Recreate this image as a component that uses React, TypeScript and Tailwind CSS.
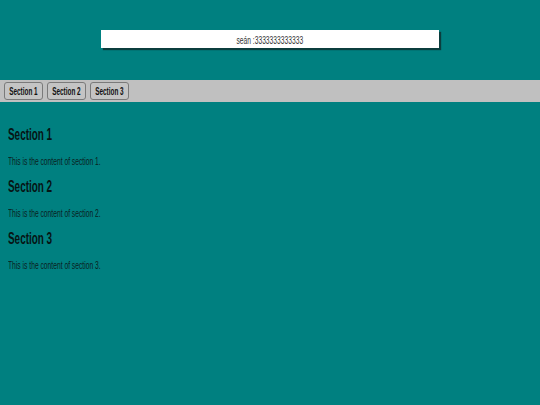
import React from 'react';

const sections = [
  { id: 1, title: 'Section 1', body: 'This is the content of section 1.' },
  { id: 2, title: 'Section 2', body: 'This is the content of section 2.' },
  { id: 3, title: 'Section 3', body: 'This is the content of section 3.' },
];

export default function App() {
  return (
    <div className="min-h-screen bg-[#008080] font-['Liberation_Sans',Arial,sans-serif]">
      {/* Header box */}
      <div className="pt-[30px] pb-[32px]">
        <div className="mx-auto w-[338px] h-[18px] bg-white shadow-[2px_2px_1px_#0b3d3d] flex items-end justify-center pb-[1px]">
          <span className="inline-block scale-x-[0.67] origin-center text-[10px] leading-[12px] text-[#333] whitespace-nowrap">
            seán :3333333333333
          </span>
        </div>
      </div>

      {/* Nav bar */}
      <div className="h-[22px] bg-[#c0c0c0] flex items-center gap-[4px] px-[4px]">
        {sections.map((s) => (
          <button
            key={s.id}
            className="w-[39px] h-[18px] rounded-[3px] border border-[#7a7a7a] bg-[#c4c4c4] flex items-center justify-center overflow-hidden"
          >
            <span className="inline-block scale-x-[0.58] origin-center text-[11px] font-bold leading-none text-[#111] whitespace-nowrap">
              {s.title}
            </span>
          </button>
        ))}
      </div>

      {/* Content */}
      <div className="px-[8px] pt-[24px]">
        {sections.map((s) => (
          <div key={s.id} className="mb-[11.5px]">
            <h2 className="text-[16px] leading-[18px] font-bold text-[#061414]">
              <span className="inline-block scale-x-[0.62] origin-left whitespace-nowrap">{s.title}</span>
            </h2>
            <p className="mt-[11.5px] text-[10.5px] leading-[11px] text-[#0a2020]">
              <span className="inline-block scale-x-[0.64] origin-left whitespace-nowrap">{s.body}</span>
            </p>
          </div>
        ))}
      </div>
    </div>
  );
}
